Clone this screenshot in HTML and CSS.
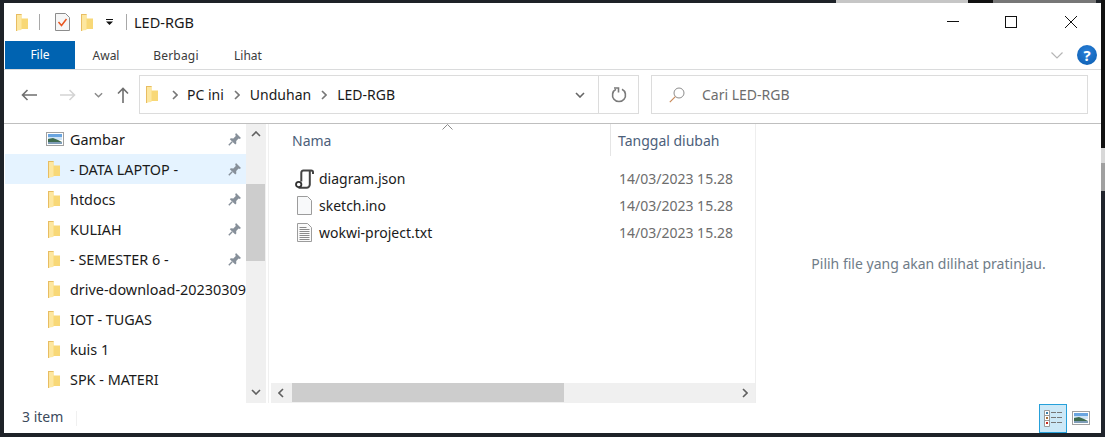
FILE: index.html
```html
<!DOCTYPE html>
<html lang="id">
<head>
    <meta charset="UTF-8" />
    <title>LED-RGB</title>
    <link rel="stylesheet" href="styles.css">
</head>
<body>
    <svg class="defs" width="0" height="0">
        <symbol id="folder" viewBox="0 0 12 17">
            <path d="M0 0h5.500v4.500H12V15H3.500L.6 17H0z" fill="#f8d877"/>
            <path d="M1 1h4.500v15L1 16.600z" fill="#fde7a0"/>
            <path d="M0 0h1v17H0zM1 0h4.500v1H1z" fill="#e8bd62"/>
        </symbol>
        <symbol id="pin" viewBox="0 0 13 13">
            <path d="M8 0l5 5-1.400 1-1-.5L8.200 8l.1 2.400-1 1L1.800 6.300l1-1 2.500.2L7.800 3l-.6-1.500z" fill="#87909a"/>
            <path d="M4.200 8.800L.8 12.200" stroke="#87909a" stroke-width="1.400" fill="none"/>
        </symbol>
        <symbol id="landscape" viewBox="0 0 18 14">
            <rect x=".5" y=".5" width="17" height="13" fill="#fff" stroke="#a0a0a0"/>
            <rect x="2" y="2" width="14" height="5" fill="#6aa5e0"/>
            <rect x="2" y="5" width="14" height="3" fill="#cfe4f5"/>
            <path d="M2 7l5-1 5 2 4 2v2H2z" fill="#3f6b4e"/>
            <rect x="2" y="10" width="14" height="2" fill="#7f9db8"/>
        </symbol>
        <symbol id="chev-down" viewBox="0 0 10 6">
            <path d="M1 1l4 4 4-4" fill="none" stroke="currentColor" stroke-width="1.600"/>
        </symbol>
        <symbol id="chev-right" viewBox="0 0 6 10">
            <path d="M1 1l4 4-4 4" fill="none" stroke="currentColor" stroke-width="1.600"/>
        </symbol>
    </svg>

    <div class="window">
        <header class="titlebar">
            <svg class="ic-folder"><use href="#folder"/></svg>
            <span class="qa-sep qa-sep-first"></span>
            <svg class="qa-doc" viewBox="0 0 15 18">
                <path d="M.5.5h10l4 4v13H.5z" fill="#f6f6f6" stroke="#8c8c8c"/>
                <path d="M3.500 9l3 3.500 5-6.500" fill="none" stroke="#e8551f" stroke-width="1.500"/>
            </svg>
            <svg class="ic-folder qa-folder"><use href="#folder"/></svg>
            <svg class="qa-drop" viewBox="0 0 7 6">
                <path d="M0 0h7v1H0zM0 2.500h7L3.500 6z" fill="#111"/>
            </svg>
            <span class="qa-sep qa-sep-last"></span>
            <span class="title-text">LED-RGB</span>
            <div class="win-controls">
                <button class="win-btn">
                    <svg width="12" height="12" viewBox="0 0 12 12"><path d="M0 5.500h12" stroke="#111"/></svg>
                </button>
                <button class="win-btn">
                    <svg width="12" height="12" viewBox="0 0 12 12"><rect x=".5" y=".5" width="11" height="11" fill="none" stroke="#111"/></svg>
                </button>
                <button class="win-btn win-close">
                    <svg width="12" height="12" viewBox="0 0 12 12"><path d="M0 0l12 12M12 0L0 12" stroke="#111"/></svg>
                </button>
            </div>
        </header>

        <nav class="ribbon">
            <span class="tab tab-file">File</span>
            <span class="tab tab-awal">Awal</span>
            <span class="tab tab-berbagi">Berbagi</span>
            <span class="tab tab-lihat">Lihat</span>
            <svg class="ribbon-chev" viewBox="0 0 12 7"><path d="M.5.5L6 6l5.500-5.500" fill="none" stroke="#b5b5b5" stroke-width="1.200"/></svg>
            <span class="help">?</span>
        </nav>

        <div class="addressrow">
            <svg class="nav-arrow arrow-back" viewBox="0 0 16 12"><path d="M16 6H1.500M6.500 1l-5 5 5 5" fill="none" stroke="#6f6f6f" stroke-width="1.600"/></svg>
            <svg class="nav-arrow arrow-forward" viewBox="0 0 16 12"><path d="M0 6h14.500M9.500 1l5 5-5 5" fill="none" stroke="#d4d4d4" stroke-width="1.600"/></svg>
            <svg class="recent"><use href="#chev-down"/></svg>
            <svg class="arrow-up" viewBox="0 0 12 16"><path d="M6 16V1.500M1 6.500l5-5 5 5" fill="none" stroke="#6f6f6f" stroke-width="1.600"/></svg>

            <div class="addressbox">
                <svg class="ic-folder crumb-folder"><use href="#folder"/></svg>
                <svg class="crumb-chev"><use href="#chev-right"/></svg>
                <span class="crumb">PC ini</span>
                <svg class="crumb-chev"><use href="#chev-right"/></svg>
                <span class="crumb">Unduhan</span>
                <svg class="crumb-chev"><use href="#chev-right"/></svg>
                <span class="crumb">LED-RGB</span>
                <svg class="address-drop"><use href="#chev-down"/></svg>
                <span class="refresh">
                    <svg width="16" height="16" viewBox="0 0 16 16"><path d="M5 2.300A6.500 6.500 0 1 0 11 2.300" fill="none" stroke="#7a7a7a" stroke-width="1.600"/><path d="M3 1h4.500v4.500" fill="none" stroke="#7a7a7a" stroke-width="1.600"/></svg>
                </span>
            </div>

            <div class="searchbox">
                <svg class="search-icon" viewBox="0 0 16 16"><circle cx="10" cy="6" r="5" fill="none" stroke="#8c8c8c"/><path d="M6.300 9.700L.8 15.200" stroke="#c98a5a" stroke-width="1.200"/></svg>
                <span class="search-text">Cari LED-RGB</span>
            </div>
        </div>

        <main class="main">
            <aside class="sidebar">
                <ul class="tree">
                    <li class="tree-row">
                        <svg class="ic-landscape"><use href="#landscape"/></svg>
                        <span class="tree-name">Gambar</span>
                        <svg class="ic-pin"><use href="#pin"/></svg>
                    </li>
                    <li class="tree-row selected">
                        <svg class="ic-folder"><use href="#folder"/></svg>
                        <span class="tree-name">- DATA LAPTOP -</span>
                        <svg class="ic-pin"><use href="#pin"/></svg>
                    </li>
                    <li class="tree-row">
                        <svg class="ic-folder"><use href="#folder"/></svg>
                        <span class="tree-name">htdocs</span>
                        <svg class="ic-pin"><use href="#pin"/></svg>
                    </li>
                    <li class="tree-row">
                        <svg class="ic-folder"><use href="#folder"/></svg>
                        <span class="tree-name">KULIAH</span>
                        <svg class="ic-pin"><use href="#pin"/></svg>
                    </li>
                    <li class="tree-row">
                        <svg class="ic-folder"><use href="#folder"/></svg>
                        <span class="tree-name">- SEMESTER 6 -</span>
                        <svg class="ic-pin"><use href="#pin"/></svg>
                    </li>
                    <li class="tree-row">
                        <svg class="ic-folder"><use href="#folder"/></svg>
                        <span class="tree-name">drive-download-20230309</span>
                    </li>
                    <li class="tree-row">
                        <svg class="ic-folder"><use href="#folder"/></svg>
                        <span class="tree-name">IOT - TUGAS</span>
                    </li>
                    <li class="tree-row">
                        <svg class="ic-folder"><use href="#folder"/></svg>
                        <span class="tree-name">kuis 1</span>
                    </li>
                    <li class="tree-row">
                        <svg class="ic-folder"><use href="#folder"/></svg>
                        <span class="tree-name">SPK - MATERI</span>
                    </li>
                </ul>
            </aside>

            <div class="vscroll">
                <svg class="vscroll-up"><use href="#chev-down"/></svg>
                <span class="vscroll-thumb"></span>
                <svg class="vscroll-down"><use href="#chev-down"/></svg>
            </div>

            <section class="filepane">
                <div class="columns">
                    <span class="col col-name">Nama</span>
                    <span class="col col-date">Tanggal diubah</span>
                    <svg class="sort-caret" viewBox="0 0 11 6"><path d="M.5 5.500L5.500.5l5 5" fill="none" stroke="#8a8a8a"/></svg>
                </div>
                <div class="files">
                    <div class="file-row">
                        <svg class="file-icon file-icon-script" viewBox="0 0 19 20">
                            <path d="M18 5V3.200A1.800 1.800 0 0 0 16.200 1.400H8.500A2.300 2.300 0 0 0 6.300 3.700V12.500" fill="none" stroke="#444" stroke-width="2"/>
                            <path d="M14.800 2v13.500A3.200 3.200 0 0 1 11.600 18.700H3.500" fill="none" stroke="#444" stroke-width="2"/>
                            <circle cx="3.700" cy="15.500" r="2.700" fill="#fff" stroke="#333" stroke-width="1.800"/>
                        </svg>
                        <span class="file-name">diagram.json</span>
                        <span class="file-date">14/03/2023 15.28</span>
                    </div>
                    <div class="file-row">
                        <svg class="file-icon" viewBox="0 0 18 20">
                            <path d="M1.500.5h10l4 4v14h-14z" fill="#f8f9fa" stroke="#9c9c9c"/>
                        </svg>
                        <span class="file-name">sketch.ino</span>
                        <span class="file-date">14/03/2023 15.28</span>
                    </div>
                    <div class="file-row">
                        <svg class="file-icon" viewBox="0 0 18 20">
                            <path d="M1.500.5h10l4 4v14h-14z" fill="#fafafa" stroke="#9c9c9c"/>
                            <path d="M3.500 4.500h7M3.500 6.500h10M3.500 8.500h10M3.500 10.500h10M3.500 12.500h10M3.500 14.500h10M3.500 16.500h10" stroke="#8a8a8a"/>
                        </svg>
                        <span class="file-name">wokwi-project.txt</span>
                        <span class="file-date">14/03/2023 15.28</span>
                    </div>
                </div>
                <div class="hscroll">
                    <svg class="hscroll-left"><use href="#chev-right"/></svg>
                    <span class="hscroll-thumb"></span>
                    <svg class="hscroll-right"><use href="#chev-right"/></svg>
                </div>
            </section>

            <section class="preview">Pilih file yang akan dilihat pratinjau.</section>
        </main>

        <footer class="statusbar">
            <span class="status-count">3 item</span>
            <span class="status-sep"></span>
            <span class="view-btn view-active">
                <svg width="18" height="17" viewBox="0 0 18 17">
                    <path d="M.5.5h5v16h-5z" fill="#fff" stroke="#9a9a9a"/>
                    <path d="M.5 5.500h5M.5 10.500h5" stroke="#9a9a9a"/>
                    <rect x="2" y="2" width="2" height="2" fill="#3b7ea8"/>
                    <rect x="2" y="7" width="2" height="2" fill="#a8703b"/>
                    <rect x="2" y="12" width="2" height="2" fill="#c8281e"/>
                    <path d="M7 2.500h5M13 2.500h5M7 7.500h5M13 7.500h5M7 12.500h5M13 12.500h5" stroke="#777"/>
                </svg>
            </span>
            <svg class="view-img"><use href="#landscape"/></svg>
        </footer>
    </div>
</body>
</html>
```

FILE: styles.css
```css
html, body {
    margin: 0;
    height: 100%;
}

/* desktop behind the window: only thin edges of it are visible */
body {
    box-sizing: border-box;
    height: 437px;
    padding: 3px 4px 4px 4px;
    overflow: hidden;
    font-family: "Noto Sans", "Open Sans", sans-serif;
    font-size: 14px;
    color: #1a1a1a;
    background:
        linear-gradient(to right, transparent 836px, #c6c6c6 836px, #c6c6c6 968px, #111 968px, #111 993px, #777 993px, #777 1096px, transparent 1096px) 0 0 / 100% 3px no-repeat,
        linear-gradient(to bottom, #111 0, #111 148px, #d8d8d8 148px, #d8d8d8 163px, #a0a0a0 163px, #a0a0a0 191px, #20242c 191px) 100% 0 / 4px 100% no-repeat,
        #1e2228;
}

.defs {
    display: block;
    height: 0;
}

svg {
    display: block;
    flex: none;
}

.window {
    display: flex;
    flex-direction: column;
    height: 430px;
    background: #fff;
}

/* title bar */
.titlebar {
    display: flex;
    align-items: center;
    height: 38px;
    padding-left: 12px;
}

.ic-folder {
    width: 12px;
    height: 17px;
}

.qa-sep {
    width: 1px;
    height: 16px;
    background: #a8a8a8;
}

.qa-sep-first {
    margin: 0 15px 0 11px;
}

.qa-sep-last {
    margin: 0 7px 0 13px;
}

.qa-doc {
    width: 15px;
    height: 18px;
}

.qa-folder {
    margin-left: 11px;
}

.qa-drop {
    width: 7px;
    height: 6px;
    margin-left: 13px;
}

.title-text {
    font-size: 14.5px;
}

.win-controls {
    display: flex;
    margin-left: auto;
    height: 100%;
}

.win-btn {
    display: flex;
    align-items: center;
    justify-content: center;
    width: 58px;
    padding: 0;
    border: none;
    background: none;
}

.win-close {
    width: 61px;
}

/* ribbon tabs */
.ribbon {
    display: flex;
    align-items: center;
    height: 28px;
    border-bottom: 1px solid #dadbdc;
    font-size: 12px;
    color: #3b3b3b;
}

.tab {
    display: block;
    text-align: center;
}

.tab-file {
    width: 70px;
    margin-left: 1px;
    height: 100%;
    line-height: 28px;
    background: #0063b1;
    color: #fff;
}

.tab-awal {
    width: 62px;
}

.tab-berbagi {
    width: 78px;
    letter-spacing: .2px;
}

.tab-lihat {
    width: 66px;
}

.ribbon-chev {
    width: 12px;
    height: 7px;
    margin-left: auto;
}

.help {
    width: 20px;
    height: 20px;
    margin: 0 4px 0 14px;
    border-radius: 50%;
    background: radial-gradient(circle at 50% 35%, #2a80d8, #0a5cb0);
    color: #fff;
    font-size: 15px;
    font-weight: bold;
    line-height: 20px;
    text-align: center;
}

/* address row */
.addressrow {
    display: flex;
    align-items: center;
    box-sizing: border-box;
    height: 54px;
    padding-bottom: 4px;
    border-bottom: 1px solid #bfbfbf;
}

.nav-arrow {
    width: 16px;
    height: 12px;
}

.arrow-back {
    margin-left: 17px;
}

.arrow-forward {
    margin-left: 23px;
}

.recent {
    width: 9px;
    height: 6px;
    margin-left: 18px;
    color: #8a8a8a;
}

.arrow-up {
    width: 12px;
    height: 16px;
    margin-left: 14px;
}

.addressbox {
    display: flex;
    align-items: center;
    box-sizing: border-box;
    width: 500px;
    height: 39px;
    margin-left: 10px;
    padding-left: 6px;
    border: 1px solid #dcdcdc;
}

.crumb-chev {
    width: 6px;
    height: 10px;
    margin: 0 9px 0 14px;
    color: #777;
}

.crumb + .crumb-chev {
    margin-left: 10px;
    margin-right: 10px;
}

.crumb {
    color: #1a1a1a;
}

.address-drop {
    width: 10px;
    height: 6px;
    margin-left: auto;
    color: #666;
}

.refresh {
    display: flex;
    align-items: center;
    justify-content: center;
    width: 39px;
    height: 100%;
    margin-left: 13px;
    border-left: 1px solid #dcdcdc;
}

.searchbox {
    display: flex;
    align-items: center;
    box-sizing: border-box;
    width: 437px;
    height: 39px;
    margin-left: 12px;
    padding-left: 17px;
    border: 1px solid #dcdcdc;
}

.search-icon {
    width: 16px;
    height: 16px;
}

.search-text {
    margin-left: 17px;
    color: #6d6d6d;
}

/* main area */
.main {
    display: flex;
    height: 279px;
    overflow: hidden;
}

.sidebar {
    width: 241px;
    margin-left: 1px;
    overflow: hidden;
}

.tree {
    list-style: none;
    margin: 0;
    padding: 0;
}

.tree-row {
    display: flex;
    align-items: center;
    height: 30px;
    padding-left: 43px;
    font-size: 14.4px;
    white-space: nowrap;
}

.tree-row.selected {
    background: #e5f3ff;
}

.ic-landscape {
    width: 18px;
    height: 14px;
    margin: 0 6px 0 -2px;
}

.tree-row .ic-folder {
    margin-right: 10px;
}

.tree-name {
    color: #1a1a1a;
}

.ic-pin {
    width: 13px;
    height: 13px;
    margin: 0 5px 0 auto;
}

/* sidebar scrollbar */
.vscroll {
    display: flex;
    flex-direction: column;
    align-items: center;
    width: 20px;
    background: #f0f0f0;
    color: #606060;
}

.vscroll-up {
    width: 10px;
    height: 6px;
    margin-top: 7px;
    transform: rotate(180deg);
}

.vscroll-thumb {
    width: 19px;
    height: 77px;
    margin: 47px 1px 0 0;
    background: #cdcdcd;
}

.vscroll-down {
    width: 10px;
    height: 6px;
    margin-top: auto;
    margin-bottom: 8px;
}

/* file list */
.filepane {
    display: flex;
    flex-direction: column;
    box-sizing: border-box;
    width: 488px;
    margin-left: 2px;
    border-left: 1px solid #f0f0f0;
    border-right: 1px solid #eeeeee;
}

.columns {
    position: relative;
    display: flex;
    height: 32px;
}

.col {
    display: flex;
    align-items: center;
    color: #4c607a;
}

.col-name {
    box-sizing: border-box;
    width: 342px;
    padding-left: 23px;
    border-right: 1px solid #e5e5e5;
}

.col-date {
    padding-left: 7px;
}

.sort-caret {
    position: absolute;
    top: 0;
    left: 173px;
    width: 11px;
    height: 6px;
}

.files {
    flex: 1;
    padding-top: 9px;
}

.file-row {
    display: grid;
    grid-template-columns: 17px 294px auto;
    column-gap: 6px;
    align-items: center;
    height: 27px;
    padding-left: 27px;
}

.file-icon {
    width: 18px;
    height: 20px;
}

.file-icon-script {
    width: 19px;
    margin-left: -1px;
}

.file-date {
    color: #6d6d6d;
    white-space: nowrap;
}

.hscroll {
    display: flex;
    align-items: center;
    height: 20px;
    margin: 0 0 0 2px;
    background: #f0f0f0;
    color: #606060;
}

.hscroll-left {
    width: 6px;
    height: 10px;
    margin: 0 8px 0 7px;
    transform: rotate(180deg);
}

.hscroll-thumb {
    width: 272px;
    height: 19px;
    margin-bottom: 1px;
    background: #cdcdcd;
}

.hscroll-right {
    width: 6px;
    height: 10px;
    margin: 0 7px 0 auto;
}

/* preview pane */
.preview {
    flex: 1;
    display: flex;
    align-items: center;
    justify-content: center;
    color: #6f7c88;
    font-size: 14px;
}

/* status bar */
.statusbar {
    display: flex;
    align-items: center;
    height: 30px;
    padding-left: 18px;
    color: #3c4a5c;
}

.status-count {
    padding-bottom: 3px;
}

.status-sep {
    width: 1px;
    height: 15px;
    margin-left: 13px;
    background: #f0f0f0;
}

.view-btn {
    display: flex;
    align-items: center;
    justify-content: center;
    box-sizing: border-box;
    width: 28px;
    height: 29px;
}

.view-active {
    margin-left: auto;
    border: 1px solid #26a0da;
    background: #cce8f7;
}

.view-img {
    width: 18px;
    height: 14px;
    margin: 0 11px 0 5px;
}
```
